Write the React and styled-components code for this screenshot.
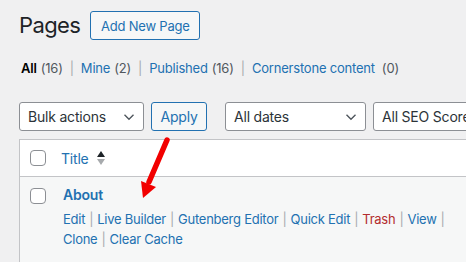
import styled, { createGlobalStyle } from 'styled-components'

const GlobalStyle = createGlobalStyle`
    html, body {
        margin: 0;
        padding: 0;
        background: #f0f0f1;
        overflow: hidden;
    }
    body {
        font-family: Inter, "Liberation Sans", sans-serif;
        font-size: 13px;
        letter-spacing: -0.2px;
        color: #1d2327;
    }
`

const filters = [
    { label: 'All', count: 16, current: true },
    { label: 'Mine', count: 2 },
    { label: 'Published', count: 16 },
    { label: 'Cornerstone content', count: 0, spaced: true },
]

const actionsLine1 = [
    { label: 'Edit' },
    { label: 'Live Builder' },
    { label: 'Gutenberg Editor' },
    { label: 'Quick Edit' },
    { label: 'Trash', danger: true },
    { label: 'View' },
]

const actionsLine2 = [{ label: 'Clone' }, { label: 'Clear Cache' }]

function Chevron() {
    return (
        <svg width="12" height="8" viewBox="0 0 12 8" fill="none">
            <path d="M1.5 1.8 L6 6.2 L10.5 1.8" stroke="#50575e" strokeWidth="1.4" />
        </svg>
    )
}

function SelectBox({ label, width }) {
    return (
        <Select $width={width}>
            <span>{label}</span>
            <Chevron />
        </Select>
    )
}

function SortIcon() {
    return (
        <svg width="10" height="16" viewBox="0 0 10 16">
            <path d="M5 1 L9 7 L1 7 Z" fill="#1d2327" />
            <path d="M1 9 L9 9 L5 15 Z" fill="#a7aaad" />
        </svg>
    )
}

function Arrow() {
    return (
        <ArrowSvg width="60" height="76" viewBox="0 0 60 76">
            <line x1="46" y1="15" x2="28" y2="57" stroke="#f20000" strokeWidth="5.5" strokeLinecap="round" />
            <path d="M20 56 L35 62 L22 73 Z" fill="#f20000" />
        </ArrowSvg>
    )
}

export default function App() {
    return (
        <Wrap>
            <GlobalStyle />
            <HeadRow>
                <Heading>Pages</Heading>
                <AddButton>Add New Page</AddButton>
            </HeadRow>
            <Filters>
                {filters.map((f, i) => (
                    <FilterItem key={f.label}>
                        {i > 0 ? <Sep>|</Sep> : null}
                        <FilterLink $current={f.current}>{f.label}</FilterLink>
                        <Count $spaced={f.spaced}>({f.count})</Count>
                    </FilterItem>
                ))}
            </Filters>
            <TableNav>
                <SelectBox label="Bulk actions" width={125} />
                <ApplyButton>Apply</ApplyButton>
                <Spacer />
                <SelectBox label="All dates" width={141} />
                <SelectBox label="All SEO Scores" width={141} />
            </TableNav>
            <Table>
                <HeadCells>
                    <Checkbox />
                    <TitleLink>Title</TitleLink>
                    <SortIcon />
                </HeadCells>
                <Row>
                    <Checkbox $top />
                    <RowBody>
                        <RowTitle>About</RowTitle>
                        <Actions>
                            {actionsLine1.map((a) => (
                                <span key={a.label}>
                                    <ActionLink $danger={a.danger}>{a.label}</ActionLink>
                                    <Pipe>|</Pipe>
                                </span>
                            ))}
                        </Actions>
                        <Actions>
                            {actionsLine2.map((a, i) => (
                                <span key={a.label}>
                                    {i > 0 ? <Pipe>|</Pipe> : null}
                                    <ActionLink>{a.label}</ActionLink>
                                </span>
                            ))}
                        </Actions>
                    </RowBody>
                </Row>
                <Arrow />
            </Table>
        </Wrap>
    )
}

const Wrap = styled.div`
    padding: 11px 0 0 19px;
    width: 600px;
`

const HeadRow = styled.div`
    display: flex;
    align-items: center;
    gap: 10px;
`

const Heading = styled.h1`
    margin: 0;
    font-size: 22px;
    font-weight: 400;
    letter-spacing: -0.6px;
    line-height: 29px;
    color: #1d2327;
`

const AddButton = styled.button`
    height: 29px;
    width: 110px;
    padding: 0;
    border: 1px solid #2271b1;
    border-radius: 3px;
    background: #f6f7f7;
    color: #2271b1;
    font-family: inherit;
    font-size: 13px;
    letter-spacing: -0.2px;
`

const Filters = styled.div`
    display: flex;
    margin: 19px 0 0 2px;
    line-height: 18px;
    white-space: nowrap;
`

const FilterItem = styled.span`
    display: inline-flex;
    align-items: center;
`

const Sep = styled.span`
    color: #a7aaad;
    margin: 0 7px;
`

const FilterLink = styled.span`
    color: ${props => (props.$current ? '#000' : '#2271b1')};
    font-weight: ${props => (props.$current ? 600 : 400)};
`

const Count = styled.span`
    color: #50575e;
    margin-left: ${props => (props.$spaced ? '7px' : '4px')};
`

const TableNav = styled.div`
    display: flex;
    align-items: center;
    gap: 7px;
    margin-top: 25px;
    height: 29px;
`

const Spacer = styled.div`
    width: 4px;
`

const Select = styled.div`
    box-sizing: border-box;
    flex: none;
    display: flex;
    align-items: center;
    justify-content: space-between;
    width: ${props => props.$width}px;
    height: 29px;
    padding: 0 8px 0 8px;
    border: 1px solid #8c8f94;
    border-radius: 3px;
    background: #fff;
    color: #2c3338;
    font-size: 14px;
    white-space: nowrap;
    overflow: hidden;
`

const ApplyButton = styled.button`
    box-sizing: border-box;
    height: 29px;
    width: 56px;
    padding: 0;
    border: 1px solid #2271b1;
    border-radius: 3px;
    background: #f6f7f7;
    color: #2271b1;
    font-family: inherit;
    font-size: 14px;
    letter-spacing: -0.2px;
`

const Table = styled.div`
    position: relative;
    margin-top: 8px;
    border: 1px solid #c3c4c7;
    border-right: none;
    background: #fff;
`

const HeadCells = styled.div`
    display: flex;
    align-items: center;
    height: 36px;
    padding-left: 10px;
    border-bottom: 1px solid #c3c4c7;
`

const Checkbox = styled.div`
    box-sizing: border-box;
    width: 16px;
    height: 16px;
    flex: none;
    border: 1px solid #8c8f94;
    border-radius: 4px;
    background: #fff;
    margin-top: ${props => (props.$top ? '11px' : '0')};
`

const TitleLink = styled.span`
    color: #2271b1;
    font-size: 14px;
    margin: 0 7px 0 15px;
`

const Row = styled.div`
    display: flex;
    align-items: flex-start;
    padding-left: 10px;
    background: #f6f7f7;
    height: 90px;
`

const RowBody = styled.div`
    margin-left: 17px;
    padding-top: 9px;
`

const RowTitle = styled.div`
    color: #2271b1;
    font-size: 14px;
    font-weight: 600;
    line-height: 18px;
    margin-bottom: 5px;
`

const Actions = styled.div`
    font-size: 13px;
    line-height: 20px;
    letter-spacing: -0.25px;
    white-space: nowrap;
`

const ActionLink = styled.span`
    color: ${props => (props.$danger ? '#b32d2e' : '#2271b1')};
`

const Pipe = styled.span`
    color: #a7aaad;
    margin: 0 4px;
`

const ArrowSvg = styled.svg`
    position: absolute;
    left: 101px;
    top: -15px;
`
